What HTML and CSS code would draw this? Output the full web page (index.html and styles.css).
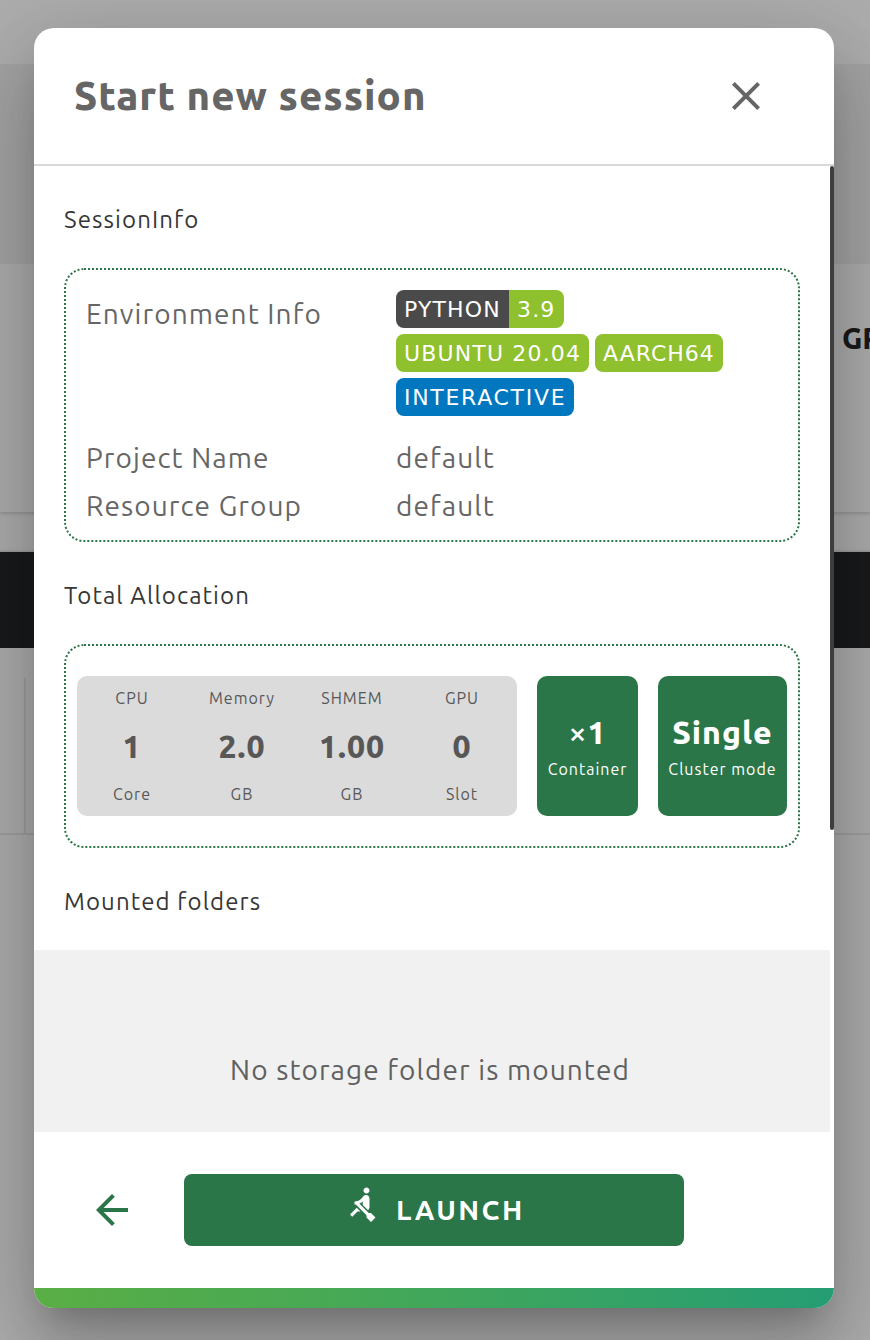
FILE: index.html
```
<!DOCTYPE html>
<html lang="en">
<head>
<meta charset="utf-8">
<title>Start new session</title>
<link rel="stylesheet" href="styles.css">
</head>
<body>
<div class="page">
  <div class="page-top"></div>
  <div class="page-band"></div>
  <div class="page-panel"><span class="page-label">GP</span></div>
  <div class="page-gap"></div>
  <div class="page-tabs"></div>
  <div class="page-list"><div class="page-cell"></div></div>
</div>
<div class="dialog">
  <header class="header">
    <h1 class="title">Start new session</h1>
    <svg class="icon close" viewBox="0 0 24 24"><path d="M19 6.41L17.59 5 12 10.59 6.41 5 5 6.41 10.59 12 5 17.59 6.41 19 12 13.41 17.59 19 19 17.59 13.41 12z"/></svg>
  </header>
  <main class="content">
    <div class="scroll">
      <h2 class="heading">SessionInfo</h2>
      <section class="box info">
        <div class="term">Environment Info</div>
        <div class="badges">
          <div class="badge-row"><div class="badge pair"><span class="part dark">PYTHON</span><span class="part green">3.9</span></div></div>
          <div class="badge-row"><span class="badge part green ubuntu">UBUNTU 20.04</span><span class="badge part green arch">AARCH64</span></div>
          <div class="badge-row"><span class="badge part blue">INTERACTIVE</span></div>
        </div>
        <div class="term">Project Name</div><div class="term">default</div>
        <div class="term">Resource Group</div><div class="term">default</div>
      </section>
      <h2 class="heading">Total Allocation</h2>
      <section class="box alloc">
        <div class="resources">
          <div class="res"><span class="small">CPU</span><b class="big">1</b><span class="small">Core</span></div>
          <div class="res"><span class="small">Memory</span><b class="big">2.0</b><span class="small">GB</span></div>
          <div class="res"><span class="small">SHMEM</span><b class="big">1.00</b><span class="small">GB</span></div>
          <div class="res"><span class="small">GPU</span><b class="big">0</b><span class="small">Slot</span></div>
        </div>
        <div class="tile container"><div class="big"><span class="times">×</span>1</div><span class="small">Container</span></div>
        <div class="tile cluster"><div class="big">Single</div><span class="small">Cluster mode</span></div>
      </section>
      <h2 class="heading">Mounted folders</h2>
      <div class="empty"><span class="empty-text">No storage folder is mounted</span></div>
    </div>
    <div class="scrollbar"><div class="thumb"></div></div>
  </main>
  <footer class="footer">
    <svg class="icon back" viewBox="0 0 24 24"><path d="M20 11H7.83l5.59-5.59L12 4l-8 8 8 8 1.41-1.41L7.83 13H20z"/></svg>
    <div class="launch">
      <svg class="rowing" viewBox="0 0 24 24"><path d="M8.5 14.5L4 19l1.5 1.5L9 17h2l-2.5-2.5zM15 1c-1.1 0-2 .9-2 2s.9 2 2 2 2-.9 2-2-.9-2-2-2zm6 20.01L18 24l-2.99-3.01V19.5l-7.1-7.09c-.31.05-.61.07-.91.07v-2.16c1.66.03 3.61-.87 4.67-2.04l1.4-1.55c.19-.21.43-.38.69-.5.29-.14.62-.23.96-.23h.03C15.99 6.01 17 7.02 17 8.26v5.75c0 .84-.35 1.61-.92 2.16l-3.58-3.58v-2.27c-.63.52-1.43 1.02-2.29 1.39L16.5 18H18l3 3.01z"/></svg>
      <span class="launch-text">LAUNCH</span>
    </div>
  </footer>
  <div class="accent"></div>
</div>
</body>
</html>
```
FILE: styles.css
```
* { box-sizing: border-box; }
body {
  margin: 0;
  width: 870px;
  height: 1340px;
  overflow: hidden;
  position: relative;
  font-family: Ubuntu, "Noto Sans", sans-serif;
  font-weight: 430;
  white-space: nowrap;
}
h1, h2 { margin: 0; }

.page { display: flex; flex-direction: column; height: 1340px; background: #adadad; }
.page-top { height: 64px; }
.page-band { height: 200px; background: #a4a4a4; }
.page-panel {
  height: 248px;
  padding: 50px 0 0 842px;
  overflow: hidden;
  box-shadow: 0 2px 3px rgba(0, 0, 0, .15);
}
.page-label { font-size: 29px; font-weight: 800; line-height: 48px; color: #1a1a1a; }
.page-gap { height: 40px; box-shadow: inset 0 -3px 3px -2px rgba(0, 0, 0, .15); }
.page-tabs { height: 96px; background: #191a1b; }
.page-list { height: 187px; padding-top: 30px; border-bottom: 2px solid #9f9f9f; }
.page-cell { width: 26px; height: 155px; border-right: 2px solid #9f9f9f; }

.dialog {
  position: absolute;
  left: 34px;
  top: 28px;
  width: 800px;
  height: 1280px;
  display: flex;
  flex-direction: column;
  overflow: hidden;
  border-radius: 20px;
  background: #fff;
  box-shadow: 0 22px 30px -14px rgba(0, 0, 0, .2), 0 48px 76px 6px rgba(0, 0, 0, .14), 0 18px 92px 16px rgba(0, 0, 0, .12);
}
.header {
  height: 138px;
  padding: 0 64px 0 40px;
  display: flex;
  align-items: center;
  justify-content: space-between;
  border-bottom: 2px solid #d9d9d9;
}
.title { font-size: 40px; font-weight: 800; line-height: 60px; color: #666; letter-spacing: 1px; }
.icon { width: 48px; height: 48px; }
.close { fill: #666; }

.content { height: 966px; display: flex; }
.scroll { width: 796px; }
.scrollbar { width: 4px; }
.thumb { height: 664px; border-radius: 2px; background: #3d3d3d; }
.heading {
  height: 102px;
  padding: 5px 0 0 30px;
  font-size: 24px;
  font-weight: 430;
  line-height: 97px;
  letter-spacing: 1.1px;
  color: #373737;
}
.box { width: 736px; margin-left: 30px; border: 2px dotted #2a7648; border-radius: 20px; }
.info {
  height: 274px;
  padding: 20px;
  display: grid;
  grid-template-columns: 310px 1fr;
  grid-template-rows: 144px 48px 48px;
}
.term { font-size: 28px; line-height: 48px; letter-spacing: 1.1px; color: #666; }
.badges { display: flex; flex-direction: column; gap: 6px; }
.badge-row { display: flex; gap: 6px; }
.badge { border-radius: 8px; overflow: hidden; }
.pair { display: flex; }
.part {
  height: 38px;
  padding: 0 8px;
  font-family: Verdana, "DejaVu Sans", sans-serif;
  font-size: 22px;
  line-height: 40px;
  letter-spacing: 1.15px;
  color: #fff;
}
.dark { width: 113px; background: #4a4a4a; }
.green { width: 55px; background: #8fc02e; }
.ubuntu { width: 193px; }
.arch { width: 128px; letter-spacing: 1px; }
.blue { width: 178px; background: #0077bf; letter-spacing: 1.7px; }

.alloc { height: 204px; padding: 30px 11px; display: flex; gap: 20px; }
.resources {
  width: 440px;
  height: 140px;
  display: flex;
  border-radius: 10px;
  background: #dbdbdb;
  color: #575757;
}
.res { width: 110px; padding-top: 10px; display: flex; flex-direction: column; align-items: center; }
.small { font-size: 16px; line-height: 24px; letter-spacing: 1px; }
.big { font-size: 32px; line-height: 72px; font-weight: 800; letter-spacing: 1px; }
.tile {
  height: 140px;
  padding-top: 31px;
  display: flex;
  flex-direction: column;
  align-items: center;
  border-radius: 10px;
  background: #2a7648;
  color: #fff;
}
.tile .big { height: 50px; line-height: 50px; }
.container { width: 101px; }
.cluster { width: 129px; }
.times { font-size: 32px; font-weight: 500; line-height: 0; }

.empty { height: 182px; padding: 96px 4px 0 0; text-align: center; background: #f1f1f1; }
.empty-text { font-size: 28px; line-height: 48px; letter-spacing: 1.1px; color: #606060; }

.footer { height: 156px; padding: 0 54px; display: flex; align-items: center; gap: 48px; }
.back { fill: #2a7648; }
.launch {
  width: 500px;
  height: 72px;
  padding-left: 160px;
  display: flex;
  gap: 16px;
  border-radius: 8px;
  background: #2a7648;
  color: #fff;
}
.rowing { width: 36px; height: 36px; margin-top: 12px; fill: #fff; }
.launch-text { font-size: 28px; font-weight: 600; line-height: 72px; letter-spacing: 2.4px; }
.accent { height: 20px; background: linear-gradient(90deg, #5aae45, #41a75b 50%, #259d73); }
```
